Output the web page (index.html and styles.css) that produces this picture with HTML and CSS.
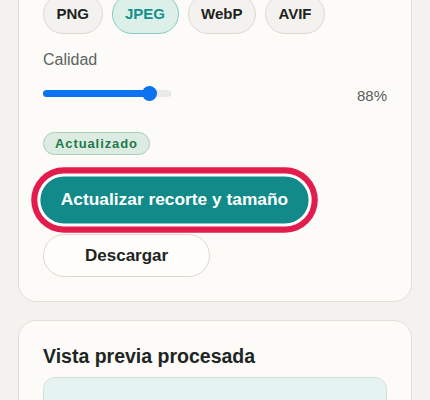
FILE: index.html
```html
<!DOCTYPE html>
<html lang="es">
<head>
<meta charset="utf-8">
<title>Exportar imagen</title>
<link rel="stylesheet" href="styles.css">
</head>
<body>
<main class="page">
  <section class="card card-settings">
    <div class="formats">
      <button class="chip" type="button">PNG</button>
      <button class="chip chip-active" type="button">JPEG</button>
      <button class="chip" type="button">WebP</button>
      <button class="chip" type="button">AVIF</button>
    </div>
    <label class="field-label" for="quality">Calidad</label>
    <div class="quality-row">
      <input id="quality" class="quality" type="range" min="0" max="100" value="88" style="--fill: 83%">
      <span class="quality-value">88%</span>
    </div>
    <span class="badge">Actualizado</span>
    <div class="actions">
      <button class="btn btn-primary" type="button">Actualizar recorte y tamaño</button>
      <button class="btn btn-secondary" type="button">Descargar</button>
    </div>
  </section>
  <section class="card card-preview">
    <h2 class="card-title">Vista previa procesada</h2>
    <div class="preview-box"></div>
  </section>
</main>
</body>
</html>
```
FILE: styles.css
```css
* { box-sizing: border-box; }

html, body {
  margin: 0;
  background: #f3f2ee;
  font-family: "Liberation Sans", Arial, sans-serif;
  color: #1d2422;
}

.page {
  margin-top: -31px;
  padding: 0 18px;
}

.card {
  background: #fcfbf7;
  border: 1px solid #e2dfd6;
  border-radius: 18px;
  padding: 24px;
}

.card-settings {
  display: flex;
  flex-direction: column;
  align-items: flex-start;
}

.formats {
  display: flex;
  gap: 9px;
}

.chip {
  font-family: inherit;
  font-size: 15px;
  font-weight: 700;
  line-height: 18px;
  padding: 10px 12.5px;
  border: 1px solid #dcd9d0;
  border-radius: 999px;
  background: #f3f2ee;
  color: #1d2321;
}

.chip-active {
  background: #dcefe9;
  border-color: #86cbc3;
  color: #14908d;
}

.field-label {
  margin-top: 15px;
  font-size: 16px;
  line-height: 22px;
  color: #5b6461;
}

.quality-row {
  align-self: stretch;
  margin-top: 10px;
  display: flex;
  align-items: center;
  justify-content: space-between;
}

.quality {
  -webkit-appearance: none;
  appearance: none;
  width: 128px;
  height: 16px;
  margin: 0;
  background: transparent;
}

.quality::-webkit-slider-runnable-track {
  height: 7px;
  border-radius: 4px;
  background: linear-gradient(to right, #0b72f0 0, #0b72f0 var(--fill), #d0d0d0 var(--fill), #e9e9e9 calc(var(--fill) + 1px), #e9e9e9 calc(100% - 1px), #cfcfcf 100%);
}

.quality::-webkit-slider-thumb {
  -webkit-appearance: none;
  appearance: none;
  width: 15px;
  height: 15px;
  margin-top: -4px;
  border-radius: 50%;
  background: #0b72f0;
  border: none;
}

.quality-value {
  margin-top: 5px;
  font-size: 15px;
  line-height: 20px;
  color: #58605d;
}

.badge {
  margin-top: 26px;
  font-size: 13px;
  font-weight: 700;
  line-height: 15px;
  letter-spacing: 0.9px;
  padding: 3px 11px;
  border: 1px solid #a9cdb8;
  border-radius: 999px;
  background: #dcece3;
  color: #23794a;
}

.actions {
  margin-top: 22px;
  display: flex;
  flex-direction: column;
  align-items: flex-start;
  gap: 11px;
}

.btn {
  font-family: inherit;
  font-size: 17px;
  font-weight: 700;
  line-height: 20px;
  border-radius: 999px;
  cursor: pointer;
}

.btn-primary {
  padding: 13px 20px;
  border: none;
  background: #118a89;
  color: #ffffff;
  transform: scale(1.02);
  box-shadow: 0 0 0 3px #ffffff, 0 0 0 9px #e21d4d;
}

.btn-secondary {
  padding: 10px 41px;
  line-height: 21px;
  border: 1px solid #dcd8cf;
  background: #fffefb;
  color: #1d2422;
}

.card-preview {
  margin-top: 18px;
}

.card-title {
  margin: 0 0 9px;
  font-size: 19.5px;
  line-height: 23px;
  font-weight: 700;
  color: #1d2624;
}

.preview-box {
  height: 140px;
  border: 1px solid #d8dfd6;
  border-radius: 12px;
  background: #e5f4f1;
}
```
